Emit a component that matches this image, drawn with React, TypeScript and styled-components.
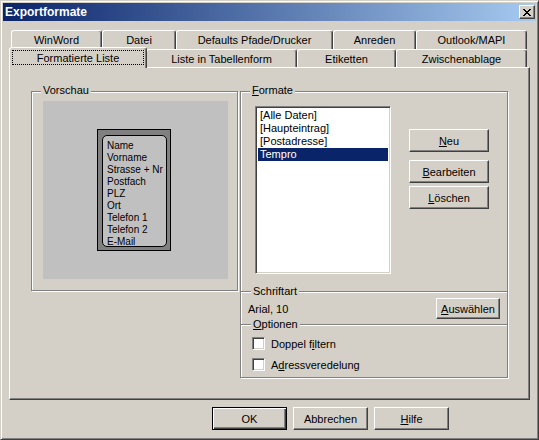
import styled, { createGlobalStyle, css } from 'styled-components'

const GlobalStyle = createGlobalStyle`
  html, body { margin: 0; padding: 0; background: #d4d0c8; }
  body { font: 11px "Liberation Sans", Arial, sans-serif; color: #000; }
  * { box-sizing: border-box; }
`

const raised = css`
  border: 1px solid;
  border-color: #fff #404040 #404040 #fff;
  box-shadow: inset -1px -1px 0 #808080;
`

const sunken = css`
  border: 1px solid;
  border-color: #808080 #fff #fff #808080;
  box-shadow: inset 1px 1px 0 #404040, inset -1px -1px 0 #d4d0c8;
`

const etched = css`
  border: 1px solid #808080;
  box-shadow: inset 1px 1px 0 #fff, 1px 1px 0 #fff;
`

const Window = styled.div`
  width: 539px;
  height: 440px;
  padding: 2px;
  background: #d4d0c8;
  border: 1px solid;
  border-color: #d4d0c8 #404040 #404040 #d4d0c8;
  box-shadow: inset 1px 1px 0 #fff, inset -1px -1px 0 #808080;
  display: flex;
  flex-direction: column;
`

const TitleBar = styled.div`
  height: 18px;
  padding: 0 1px 0 2px;
  background: linear-gradient(to right, #0a246a, #a6caf0);
  display: flex;
  align-items: center;
  justify-content: space-between;
`

const Title = styled.span`
  color: #fff;
  font-weight: bold;
  font-size: 12px;
`

const CloseButton = styled.div`
  width: 16px;
  height: 14px;
  background: #d4d0c8;
  ${raised};
  display: flex;
  align-items: center;
  justify-content: center;
  padding-right: 1px;
`

const TabStrip = styled.div`
  margin: 9px 0 0 6px;
  width: 521px;
`

const TabRow = styled.div<{ $h: number }>`
  display: flex;
  align-items: flex-end;
  height: ${p => p.$h}px;
  padding-left: 2px;
`

const Tab = styled.div<{ $w: number; $active?: boolean }>`
  flex: none;
  width: ${p => p.$w}px;
  height: 100%;
  background: #d4d0c8;
  border-top: 1px solid #fff;
  border-left: 1px solid #fff;
  border-right: 1px solid #404040;
  box-shadow: inset -1px 0 0 #808080;
  border-radius: 3px 3px 0 0;
  display: flex;
  align-items: center;
  justify-content: center;
  white-space: nowrap;

  ${p =>
    p.$active &&
    css`
      width: ${p.$w + 3}px;
      height: 21px;
      margin: 0 -1px -1px -2px;
      position: relative;
      z-index: 1;
      align-items: stretch;
    `}
`

const FocusRing = styled.span`
  flex: 1;
  margin: 2px 2px 3px 2px;
  border: 1px dotted #000;
  display: flex;
  align-items: center;
  justify-content: center;
`

const Panel = styled.div`
  width: 521px;
  height: 333px;
  margin-left: 6px;
  ${raised};
  padding: 23px 0 0 21px;
  display: flex;
  align-items: flex-start;
  gap: 2px;
`

const Group = styled.div<{ $w: number; $h: number }>`
  position: relative;
  width: ${p => p.$w}px;
  height: ${p => p.$h}px;
  ${etched};
`

const Legend = styled.span`
  position: absolute;
  top: -8px;
  left: 9px;
  padding: 0 2px;
  line-height: 13px;
  background: #d4d0c8;
`

const PreviewArea = styled.div`
  width: 185px;
  height: 178px;
  margin: 9px 0 0 11px;
  background: #c0c0c0;
  display: flex;
  align-items: center;
  justify-content: center;
`

const Card = styled.div`
  width: 74px;
  height: 122px;
  margin-left: -3px;
  border: 1px solid #000;
  background: #808080;
  padding: 5px 3px 3px 4px;
`

const CardInner = styled.div`
  height: 100%;
  border: 1px solid #000;
  border-radius: 5px;
  background: #c0c0c0;
  padding: 4px 0 0 4px;
  font-size: 10px;
  line-height: 12px;
  overflow: hidden;
  white-space: nowrap;
`

const FormatTop = styled.div`
  display: flex;
  padding: 14px 0 0 14px;
  gap: 18px;
`

const ListBox = styled.div`
  width: 136px;
  height: 168px;
  background: #fff;
  ${sunken};
  padding: 2px;
`

const ListItem = styled.div<{ $selected?: boolean }>`
  height: 13px;
  line-height: 13px;
  padding-left: 2px;
  white-space: nowrap;
  ${p =>
    p.$selected &&
    css`
      background: #0a246a;
      color: #fff;
    `}
`

const ButtonColumn = styled.div`
  display: flex;
  flex-direction: column;
  gap: 3px;
  padding-top: 23px;
`

const Button = styled.div<{ $w: number; $h?: number; $default?: boolean; $spaced?: boolean }>`
  width: ${p => p.$w}px;
  height: ${p => p.$h ?? 23}px;
  background: #d4d0c8;
  ${raised};
  display: flex;
  align-items: center;
  justify-content: center;
  white-space: nowrap;
  ${p => p.$spaced && 'margin-bottom: 5px;'}
  ${p =>
    p.$default &&
    css`
      border: 1px solid #000;
      box-shadow: inset 1px 1px 0 #fff, inset -1px -1px 0 #404040, inset -2px -2px 0 #808080;
    `}
`

const Separator = styled.div<{ $mt: number }>`
  position: relative;
  margin-top: ${p => p.$mt}px;
  border-top: 1px solid #808080;
  border-bottom: 1px solid #fff;
`

const SeparatorLabel = styled.span`
  position: absolute;
  top: -7px;
  left: 10px;
  padding: 0 2px;
  line-height: 13px;
  background: #d4d0c8;
`

const FontRow = styled.div`
  display: flex;
  align-items: center;
  justify-content: space-between;
  margin-top: 5px;
  padding: 0 7px 0 7px;
`

const Options = styled.div`
  display: flex;
  flex-direction: column;
  gap: 8px;
  padding: 11px 0 0 11px;
`

const CheckRow = styled.label`
  display: flex;
  align-items: center;
  gap: 6px;
  height: 13px;
`

const CheckBox = styled.span`
  width: 13px;
  height: 13px;
  background: #fff;
  ${sunken};
`

const Footer = styled.div`
  display: flex;
  gap: 6px;
  margin-top: 7px;
  padding-left: 209px;
`

const rowOne = [
  { label: 'WinWord', w: 91 },
  { label: 'Datei', w: 74 },
  { label: 'Defaults Pfade/Drucker', w: 157 },
  { label: 'Anreden', w: 83 },
  { label: 'Outlook/MAPI', w: 111 },
]

const rowTwo = [
  { label: 'Formatierte Liste', w: 135 },
  { label: 'Liste in Tabellenform', w: 151 },
  { label: 'Etiketten', w: 99 },
  { label: 'Zwischenablage', w: 131 },
]

const previewFields = ['Name', 'Vorname', 'Strasse + Nr', 'Postfach', 'PLZ', 'Ort', 'Telefon 1', 'Telefon 2', 'E-Mail']

const formats = ['[Alle Daten]', '[Haupteintrag]', '[Postadresse]', 'Tempro']

function CloseGlyph() {
  return (
    <svg width="8" height="7" viewBox="0 0 8 7" shapeRendering="crispEdges">
      <path
        fill="#000"
        d="M0 0h2v1H0zM6 0h2v1H6zM1 1h2v1H1zM5 1h2v1H5zM2 2h4v1H2zM3 3h2v1H3zM2 4h4v1H2zM1 5h2v1H1zM5 5h2v1H5zM0 6h2v1H0zM6 6h2v1H6z"
      />
    </svg>
  )
}

export default function App() {
  return (
    <>
      <GlobalStyle />
      <Window>
        <TitleBar>
          <Title>Exportformate</Title>
          <CloseButton>
            <CloseGlyph />
          </CloseButton>
        </TitleBar>

        <TabStrip>
          <TabRow $h={19}>
            {rowOne.map(t => (
              <Tab key={t.label} $w={t.w}>
                {t.label}
              </Tab>
            ))}
          </TabRow>
          <TabRow $h={18}>
            {rowTwo.map((t, i) => (
              <Tab key={t.label} $w={t.w} $active={i === 0}>
                {i === 0 ? <FocusRing>{t.label}</FocusRing> : t.label}
              </Tab>
            ))}
          </TabRow>
        </TabStrip>

        <Panel>
          <Group $w={207} $h={200}>
            <Legend>Vorschau</Legend>
            <PreviewArea>
              <Card>
                <CardInner>
                  {previewFields.map(f => (
                    <div key={f}>{f}</div>
                  ))}
                </CardInner>
              </Card>
            </PreviewArea>
          </Group>

          <Group $w={268} $h={287}>
            <Legend>
              <u>F</u>ormate
            </Legend>
            <FormatTop>
              <ListBox>
                {formats.map(f => (
                  <ListItem key={f} $selected={f === 'Tempro'}>
                    {f}
                  </ListItem>
                ))}
              </ListBox>
              <ButtonColumn>
                <Button $w={80} $spaced>
                  <u>N</u>eu
                </Button>
                <Button $w={80}>
                  <u>B</u>earbeiten
                </Button>
                <Button $w={80}>
                  <u>L</u>öschen
                </Button>
              </ButtonColumn>
            </FormatTop>

            <Separator $mt={17}>
              <SeparatorLabel>Schriftart</SeparatorLabel>
            </Separator>
            <FontRow>
              <span>Arial, 10</span>
              <Button $w={64} $h={21}>
                <u>A</u>uswählen
              </Button>
            </FontRow>

            <Separator $mt={5}>
              <SeparatorLabel>
                <u>O</u>ptionen
              </SeparatorLabel>
            </Separator>
            <Options>
              <CheckRow>
                <CheckBox />
                <span>
                  Doppel f<u>i</u>ltern
                </span>
              </CheckRow>
              <CheckRow>
                <CheckBox />
                <span>
                  A<u>d</u>ressveredelung
                </span>
              </CheckRow>
            </Options>
          </Group>
        </Panel>

        <Footer>
          <Button $w={75} $default>
            OK
          </Button>
          <Button $w={75}>Abbrechen</Button>
          <Button $w={75}>
            <u>H</u>ilfe
          </Button>
        </Footer>
      </Window>
    </>
  )
}
